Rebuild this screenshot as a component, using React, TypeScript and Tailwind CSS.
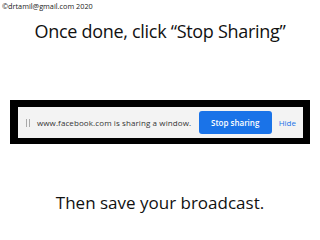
import React from 'react';

export default function App() {
  return (
    <div className="w-[320px] h-[240px] bg-white overflow-hidden flex flex-col" style={{ fontFamily: '"Open Sans", "Liberation Sans", sans-serif' }}>
      <p className="pl-[2px] pt-[1px] text-[7.3px] leading-[10px] text-[#222]">©drtamil@gmail.com 2020</p>
      <h1 className="mt-[8px] text-center text-[18px] leading-[24px] tracking-[-0.3px] text-[#111]">Once done, click “Stop Sharing”</h1>

      {/* screenshot of the browser share bar */}
      <div className="mt-[57px] mx-[10px] h-[44px] bg-black pl-[8px] pr-[7px] pt-[7px] pb-[6px]">
        <div className="h-full bg-[#f3f3f3] flex items-center pl-[8px] pr-[7px]">
          <div className="flex gap-[2px] mr-[7px]">
            <span className="w-[1px] h-[8px] bg-[#aaa]" />
            <span className="w-[1px] h-[8px] bg-[#aaa]" />
          </div>
          <span className="text-[8px] tracking-[0.1px] text-[#333] whitespace-nowrap">www.facebook.com is sharing a window.</span>
          <button className="ml-auto w-[73px] h-[23px] rounded-[3px] bg-[#1a73e8] text-white text-[8px] font-semibold">Stop sharing</button>
          <span className="ml-[7px] text-[8px] text-[#1a73e8]">Hide</span>
        </div>
      </div>

      <p className="mt-[47px] text-center text-[17px] leading-[24px] text-[#111]">Then save your broadcast.</p>
    </div>
  );
}
